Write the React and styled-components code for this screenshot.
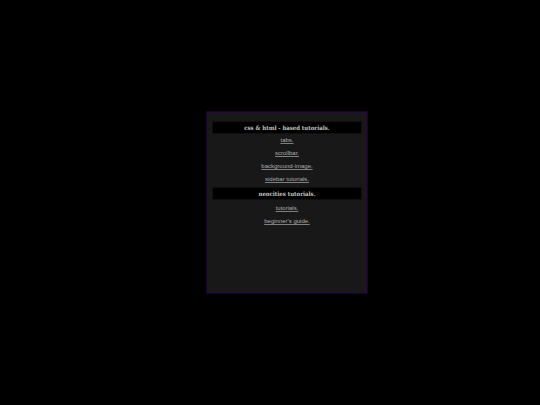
import styled, { createGlobalStyle } from "styled-components";

const sections = [
  {
    title: "css & html - based tutorials.",
    links: ["tabs.", "scrollbar.", "background-image.", "sidebar tutorials."],
  },
  {
    title: "neocities tutorials.",
    links: ["tutorials.", "beginner's guide."],
  },
];

const App = () => {
  return (
    <>
      <GlobalStyle />
      <SPage>
        <SPanel>
          {sections.map((section) => (
            <SSection key={section.title}>
              <STitle>{section.title}</STitle>
              <SList>
                {section.links.map((link) => (
                  <li key={link}>
                    <SLink href="#">{link}</SLink>
                  </li>
                ))}
              </SList>
            </SSection>
          ))}
        </SPanel>
      </SPage>
    </>
  );
};

const GlobalStyle = createGlobalStyle`
  * {
    box-sizing: border-box;
    margin: 0;
    padding: 0;
  }

  body {
    background: #000;
  }
`;

const SPage = styled.main`
  display: flex;
  align-items: center;
  justify-content: center;
  min-height: 100vh;
  padding-left: 34px;
`;

const SPanel = styled.div`
  width: 30%;
  min-width: 162px;
  max-width: 324px;
  min-height: 183px;
  padding: 9px 5px;
  background: #181818;
  border: 1px solid #16061f;
  box-shadow: inset 0 0 0 1px #260a3a;
`;

const SSection = styled.section`
  text-align: center;

  & + & ul {
    padding-top: 2px;
  }
`;

const STitle = styled.h2`
  background: #000;
  border: 1px solid #101010;
  color: #c4c4c4;
  font: bold 6px/11px "DejaVu Serif Condensed", "DejaVu Serif", serif;
`;

const SList = styled.ul`
  padding-bottom: 1px;
  list-style: none;
  font: 6px/13px "Liberation Sans", Arial, sans-serif;
`;

const SLink = styled.a`
  color: #acacac;
  text-decoration: underline #808080;
`;

export default App;
